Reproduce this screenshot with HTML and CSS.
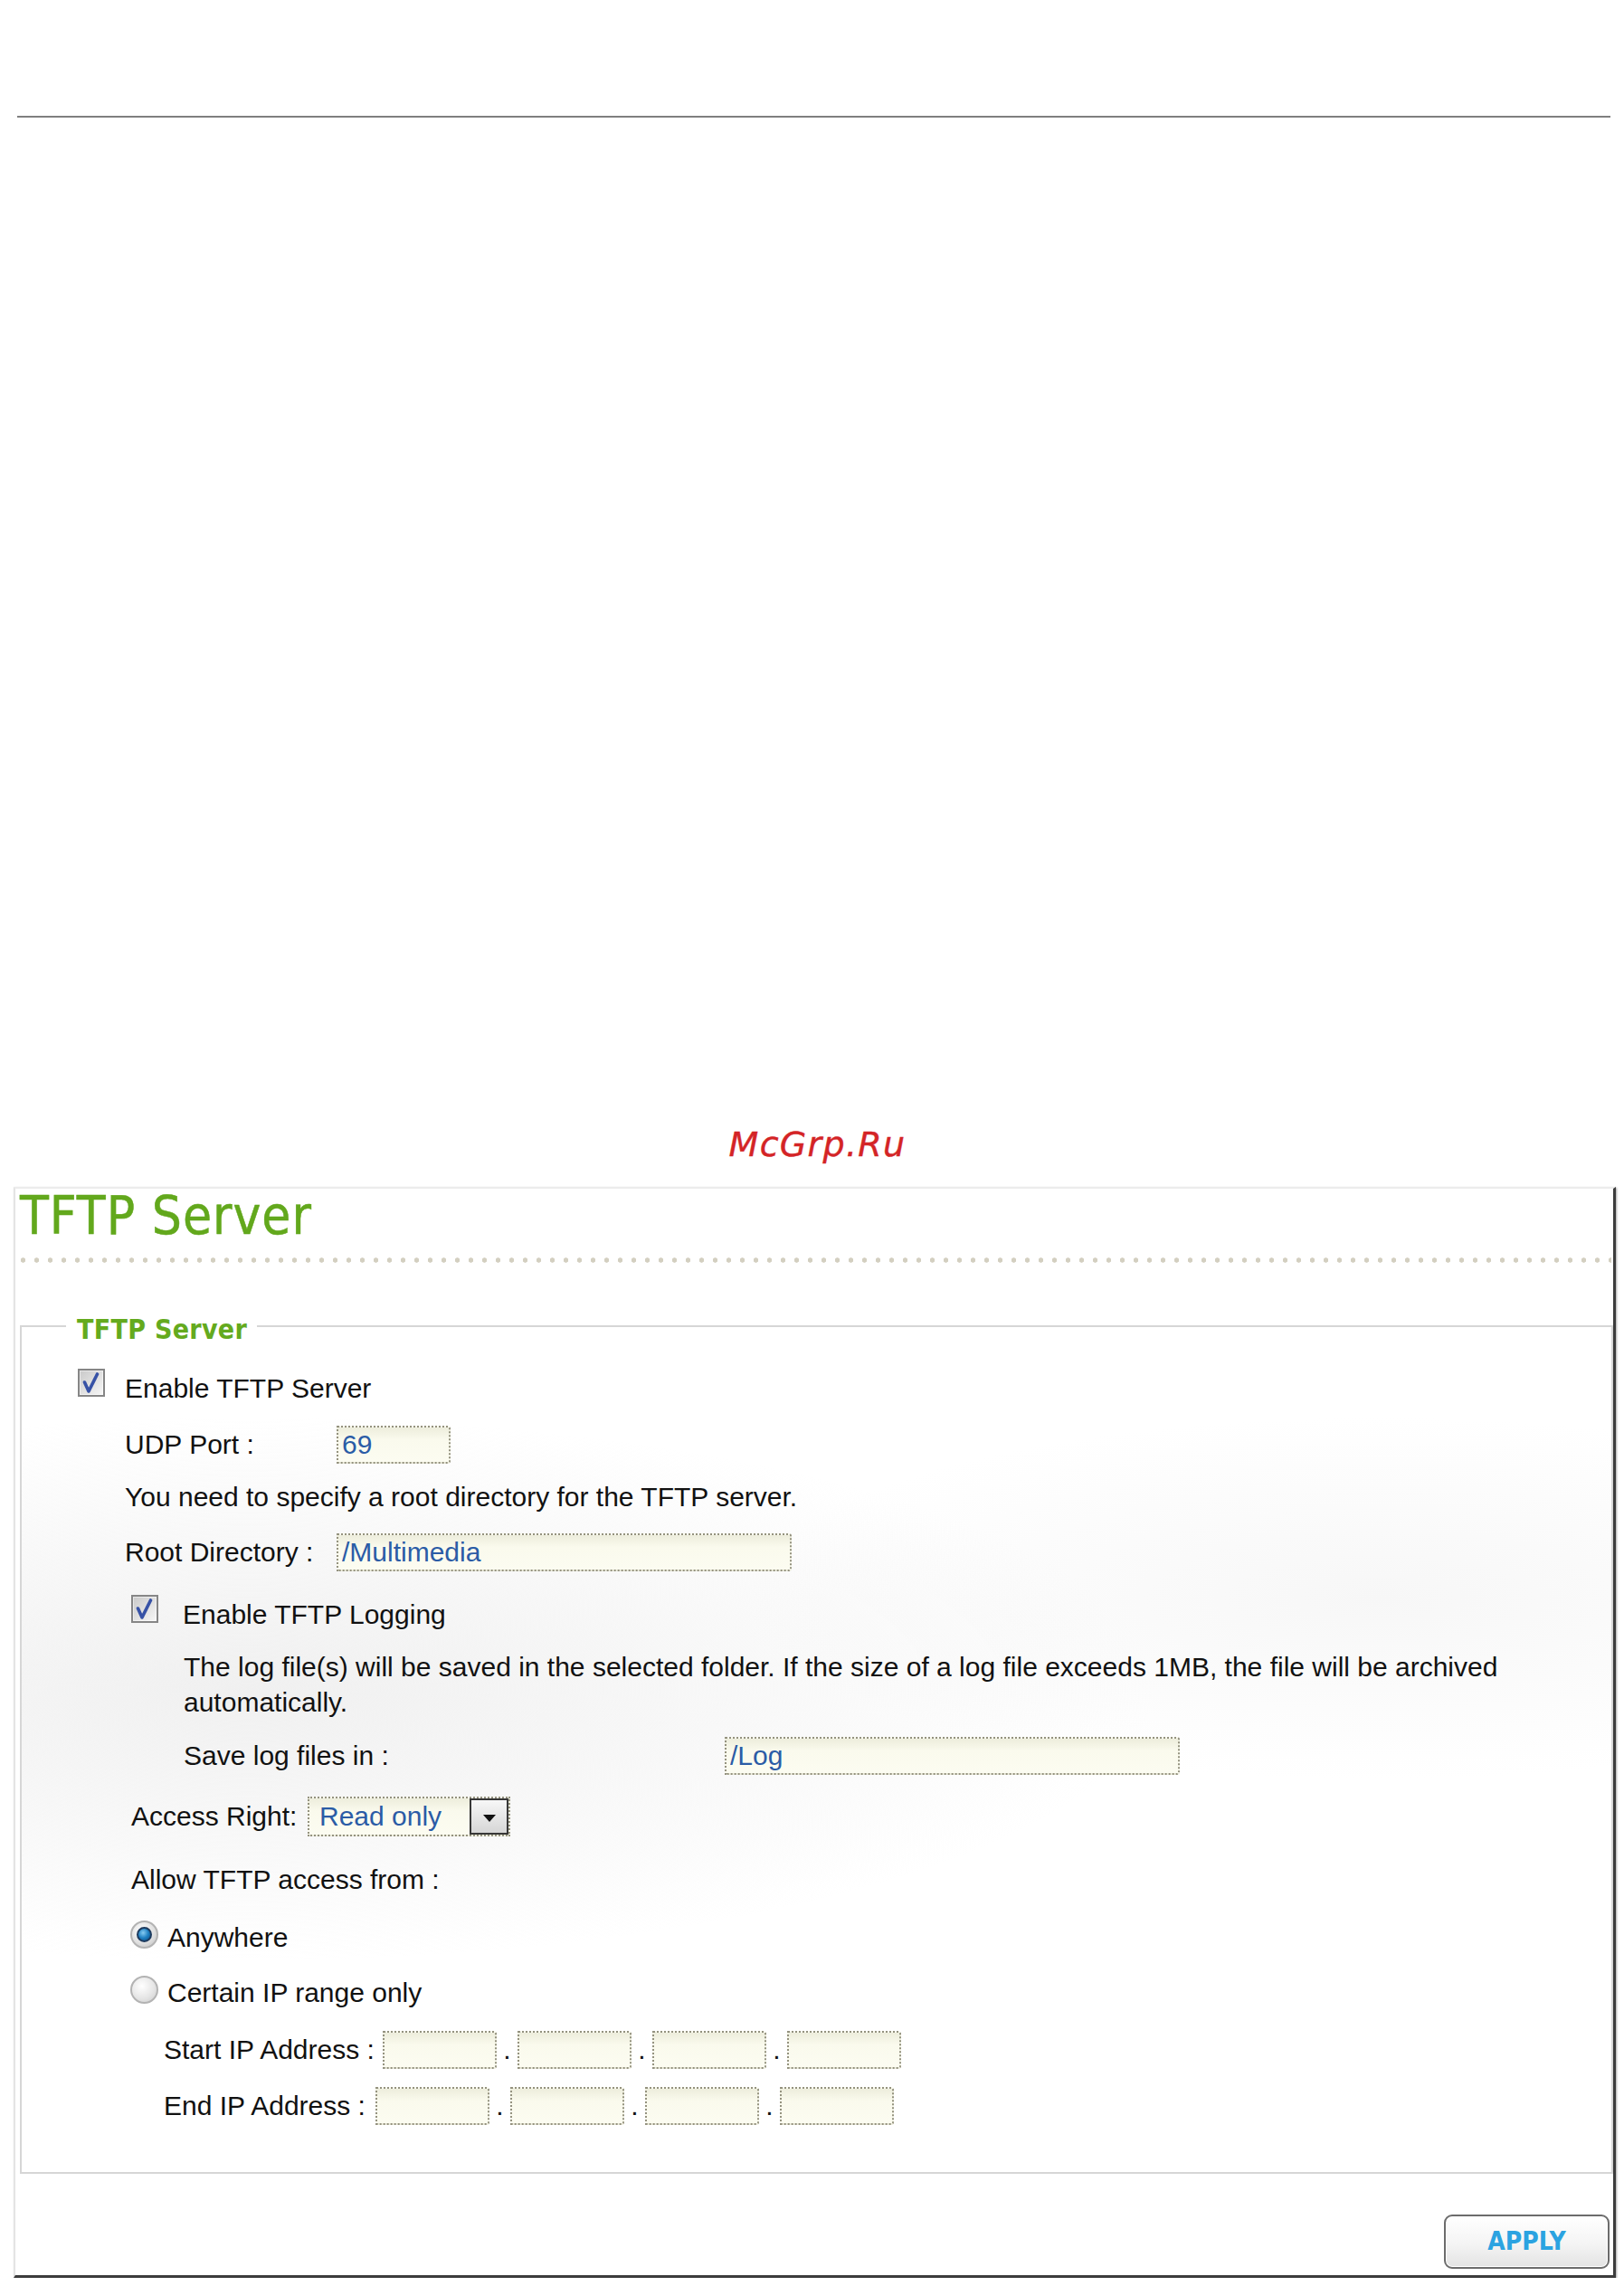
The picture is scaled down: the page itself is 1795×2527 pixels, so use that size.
FILE: index.html
```html
<!DOCTYPE html>
<html lang="en">
<head>
<meta charset="utf-8">
<title>TFTP Server</title>
<link rel="stylesheet" href="styles.css">
</head>
<body>
<div class="page">
  <div class="top-rule"></div>
  <div class="watermark">McGrp.Ru</div>

  <div class="panel">
    <h1 class="title">TFTP Server</h1>
    <div class="dots"></div>

    <fieldset class="group">
      <legend class="legend">TFTP Server</legend>
      <div class="group-body">

        <div class="row check-row r-enable">
          <span class="checkbox"><svg width="26" height="27" viewBox="0 0 26 27"><path d="M5.5 13 L10 23 L19.5 4" fill="none" stroke="#3752a6" stroke-width="3.6" stroke-linecap="round" stroke-linejoin="round"/></svg></span>
          <span class="text check-text">Enable TFTP Server</span>
        </div>

        <div class="row field-row r-udp indent-1">
          <span class="label w-short">UDP Port :</span>
          <input class="input w-port" type="text" value="69" readonly>
        </div>

        <p class="text note r-note1 indent-1">You need to specify a root directory for the TFTP server.</p>

        <div class="row field-row r-root indent-1">
          <span class="label w-short">Root Directory :</span>
          <input class="input w-long" type="text" value="/Multimedia" readonly>
        </div>

        <div class="row check-row r-log indent-2">
          <span class="checkbox"><svg width="26" height="27" viewBox="0 0 26 27"><path d="M5.5 13 L10 23 L19.5 4" fill="none" stroke="#3752a6" stroke-width="3.6" stroke-linecap="round" stroke-linejoin="round"/></svg></span>
          <span class="text log-text">Enable TFTP Logging</span>
        </div>

        <p class="text note2 indent-3">The log file(s) will be saved in the selected folder. If the size of a log file exceeds 1MB, the file will be archived automatically.</p>

        <div class="row field-row r-save indent-3">
          <span class="label w-save">Save log files in :</span>
          <input class="input w-long" type="text" value="/Log" readonly>
        </div>

        <div class="row select-row r-access indent-2">
          <span class="label w-access">Access Right:</span>
          <div class="select">
            <span class="select-value">Read only</span>
            <span class="select-btn"><span class="tri"></span></span>
          </div>
        </div>

        <p class="text r-allow indent-2">Allow TFTP access from :</p>

        <div class="row radio-row r-any indent-radio">
          <span class="radio on"><span class="radio-dot"></span></span>
          <span class="text radio-text">Anywhere</span>
        </div>

        <div class="row radio-row r-certain indent-radio">
          <span class="radio"></span>
          <span class="text radio-text">Certain IP range only</span>
        </div>

        <div class="row field-row r-start indent-4">
          <span class="label">Start IP Address :</span>
          <div class="ip">
            <input class="input w-ip" type="text" value="" readonly>
            <span class="ip-dot">.</span>
            <input class="input w-ip" type="text" value="" readonly>
            <span class="ip-dot">.</span>
            <input class="input w-ip" type="text" value="" readonly>
            <span class="ip-dot">.</span>
            <input class="input w-ip" type="text" value="" readonly>
          </div>
        </div>

        <div class="row field-row r-end indent-4">
          <span class="label">End IP Address :</span>
          <div class="ip ip-end">
            <input class="input w-ip" type="text" value="" readonly>
            <span class="ip-dot">.</span>
            <input class="input w-ip" type="text" value="" readonly>
            <span class="ip-dot">.</span>
            <input class="input w-ip" type="text" value="" readonly>
            <span class="ip-dot">.</span>
            <input class="input w-ip" type="text" value="" readonly>
          </div>
        </div>

      </div>
    </fieldset>

    <button class="apply" type="button">APPLY</button>
  </div>
</div>
</body>
</html>
```

FILE: styles.css
```css
* { box-sizing: border-box; }

html, body {
  margin: 0;
  padding: 0;
  background: #ffffff;
}

body {
  width: 1795px;
  font-family: "Liberation Sans", Arial, sans-serif;
  color: #111111;
}

.top-rule {
  margin: 128px 0 0 19px;
  width: 1761px;
  height: 2px;
  background: #7f7f7f;
}

.watermark {
  margin-top: 1116px;
  height: 38px;
  line-height: 38px;
  padding-left: 12px;
  text-align: center;
  font-family: "DejaVu Sans", sans-serif;
  font-style: oblique;
  font-size: 38px;
  letter-spacing: 1.3px;
  color: #d42426;
  -webkit-text-stroke: 0.4px #d42426;
}

/* ---------- panel ---------- */
.panel {
  margin: 28px 0 0 15px;
  width: 1771px;
  border-top: 2px solid #ececec;
  border-left: 2px solid #e4e4e4;
  border-right: 3px solid #3c3c3c;
  border-bottom: 3px solid #3c3c3c;
  box-shadow: 1px 1px 2px rgba(0, 0, 0, 0.35);
  background: #ffffff;
  padding: 0 0 7px 0;
}

.title {
  margin: 1px 0 0 5px;
  height: 58px;
  font-family: "DejaVu Sans Condensed", "DejaVu Sans", sans-serif;
  font-stretch: condensed;
  font-weight: normal;
  font-size: 58px;
  line-height: 58px;
  letter-spacing: 1px;
  color: #62a81c;
  -webkit-text-stroke: 0.5px #62a81c;
}

.dots {
  margin: 17px 0 0 6px;
  width: 1758px;
  height: 6px;
  background-image: radial-gradient(circle at 2.5px 3px, #d3cfc0 2.4px, rgba(255, 255, 255, 0) 3px);
  background-size: 15px 6px;
  background-repeat: repeat-x;
}

/* ---------- fieldset ---------- */
.group {
  margin: 50px 0 0 5px;
  padding: 0;
  min-width: 0;
  border: 2px solid #d6d6d6;
  background:
    radial-gradient(ellipse 1000px 300px at 250px 400px, #f0f0f0, rgba(255, 255, 255, 0)),
    radial-gradient(ellipse 700px 200px at 1500px 300px, #f7f7f7, rgba(255, 255, 255, 0));
}

.legend {
  margin-left: 49px;
  padding: 9px 11px 0 12px;
  font-family: "DejaVu Sans Condensed", "DejaVu Sans", sans-serif;
  font-stretch: condensed;
  font-weight: bold;
  font-size: 30px;
  line-height: 30px;
  letter-spacing: 0.3px;
  color: #64aa1e;
}

.group-body {
  padding: 30px 0 52px 62px;
}

.text {
  margin: 0;
  font-size: 30px;
  line-height: 40px;
}

.row {
  display: flex;
}

.check-row {
  align-items: flex-start;
  height: 40px;
}

.field-row {
  align-items: center;
  height: 42px;
}

.select-row {
  align-items: center;
  height: 44px;
}

.radio-row {
  align-items: flex-start;
  height: 40px;
}

.indent-1 { padding-left: 52px; }
.indent-2 { padding-left: 59px; }
.indent-3 { padding-left: 117px; }
.indent-4 { padding-left: 95px; }
.indent-radio { padding-left: 58px; }

/* vertical rhythm */
.r-udp { margin-top: 21px; }
.r-note1 { margin-top: 17px; }
.r-root { margin-top: 20px; }
.r-log { margin-top: 28px; }
.note2 { margin-top: 18px; line-height: 39px; }
.r-save { margin-top: 19px; }
.r-access { margin-top: 24px; }
.r-allow { margin-top: 28px; }
.r-any { margin-top: 24px; }
.r-certain { margin-top: 21px; }
.r-start { margin-top: 22px; }
.r-end { margin-top: 20px; }

.label {
  flex: none;
  font-size: 30px;
  line-height: 40px;
}

.w-short { width: 234px; }
.w-save { width: 598px; }
.w-access { width: 195px; }

/* ---------- checkbox ---------- */
.checkbox {
  flex: none;
  display: flex;
  align-items: center;
  justify-content: center;
  width: 30px;
  height: 31px;
  margin-top: -2px;
  border: 2px solid #868686;
  background: linear-gradient(135deg, #c9c9c9, #f7f7f7);
  box-shadow: inset 0 0 0 1px rgba(255, 255, 255, 0.55);
}

.check-text { margin-left: 22px; }
.log-text { margin-left: 27px; }

/* ---------- inputs ---------- */
.input {
  flex: none;
  display: block;
  height: 42px;
  margin: 0;
  padding: 0 4px;
  border: 2px dotted #94927f;
  border-radius: 0 3px 3px 0;
  background: linear-gradient(#ededdc, #fafaed 35%, #fcfcf1);
  font-family: "Liberation Sans", Arial, sans-serif;
  font-size: 30px;
  color: #2b5ca6;
  outline: none;
}

.w-port { width: 126px; }
.w-long { width: 503px; }
.w-ip { width: 126px; }

.ip {
  display: flex;
  align-items: center;
  margin-left: 9px;
}

.ip-end { margin-left: 11px; }

.ip-dot {
  flex: none;
  width: 23px;
  text-align: center;
  font-size: 30px;
  line-height: 40px;
}

/* ---------- select ---------- */
.select {
  display: flex;
  align-items: center;
  width: 224px;
  height: 44px;
  border: 2px dotted #94927f;
  background: linear-gradient(#ededdc, #fafaed 35%, #fcfcf1);
}

.select-value {
  padding-left: 11px;
  font-size: 30px;
  line-height: 40px;
  color: #2b5ca6;
}

.select-btn {
  display: flex;
  align-items: center;
  justify-content: center;
  margin-left: auto;
  width: 43px;
  height: 40px;
  border: 2px solid #373737;
  background: linear-gradient(#f7f7f7, #d6d6d6);
}

.tri {
  margin-top: 4px;
  width: 0;
  height: 0;
  border-left: 7px solid transparent;
  border-right: 7px solid transparent;
  border-top: 8px solid #111111;
}

/* ---------- radios ---------- */
.radio {
  flex: none;
  display: flex;
  align-items: center;
  justify-content: center;
  width: 31px;
  height: 31px;
  margin-top: 1px;
  border-radius: 50%;
  border: 2px solid #b3b3b3;
  background: radial-gradient(circle at 40% 35%, #ffffff, #e6e6e6 55%, #cbcbcb);
}

.radio.on {
  background: radial-gradient(circle at 40% 35%, #ffffff, #dedede 60%, #bdbdbd);
}

.radio-dot {
  width: 17px;
  height: 17px;
  border-radius: 50%;
  border: 2px solid #1e3b5e;
  background: radial-gradient(circle at 40% 35%, #86cbf2, #1f80c2 50%, #0c4a7f);
}

.radio-text { margin-left: 10px; }

/* ---------- apply button ---------- */
.apply {
  display: block;
  margin: 45px 4px 0 auto;
  width: 183px;
  height: 60px;
  padding: 0;
  border: 2px solid #6c6c6c;
  border-radius: 9px;
  background: linear-gradient(#ffffff, #f4f4f4 55%, #e3e3e3);
  box-shadow: inset 0 0 0 1px #ffffff;
  font-family: "DejaVu Sans Condensed", "DejaVu Sans", sans-serif;
  font-stretch: condensed;
  font-weight: bold;
  font-size: 28px;
  line-height: 56px;
  color: #2ba3e1;
  cursor: pointer;
}
```
